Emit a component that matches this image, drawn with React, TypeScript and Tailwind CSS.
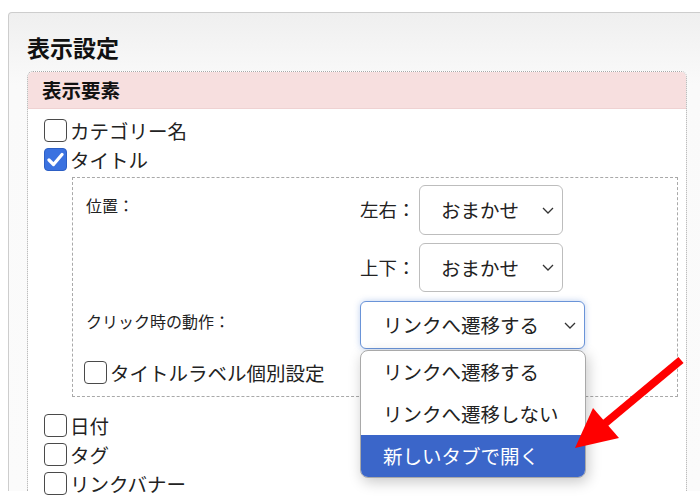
import type { ReactNode } from 'react'

const font = { fontFamily: '"Noto Sans CJK JP", "Noto Sans", sans-serif' }

function Chevron() {
  return (
    <svg width="12" height="7" viewBox="0 0 12 7" className="shrink-0">
      <path d="M1 1l5 5 5-5" fill="none" stroke="#333" strokeWidth="1.3" />
    </svg>
  )
}

function Checkbox({ checked = false }: { checked?: boolean }) {
  if (checked) {
    return (
      <span className="flex h-[23px] w-[23px] shrink-0 items-center justify-center rounded-[4px] border border-[#2d5fc4] bg-[#3b72e0]">
        <svg width="17" height="15" viewBox="0 0 17 15">
          <path d="M2 8l4.5 4.5L15 2.5" fill="none" stroke="#fff" strokeWidth="3.2" strokeLinecap="round" strokeLinejoin="round" />
        </svg>
      </span>
    )
  }
  return <span className="h-[23px] w-[23px] shrink-0 rounded-[4px] border-[1.5px] border-[#4a4a4a] bg-white" />
}

function CheckRow({ label, checked }: { label: string; checked?: boolean }) {
  return (
    <div className="flex h-[29px] items-center gap-[3px] text-[19.5px] leading-[29px] text-[#222]">
      <Checkbox checked={checked} />
      <span>{label}</span>
    </div>
  )
}

function FakeSelect({ value, className, children }: { value: string; className: string; children?: ReactNode }) {
  return (
    <div className={`relative flex items-center justify-between rounded-[6px] bg-white pr-[8px] text-[19.5px] text-[#222] ${className}`}>
      <span>{value}</span>
      <Chevron />
      {children}
    </div>
  )
}

export default function App() {
  const options = ['リンクへ遷移する', 'リンクへ遷移しない', '新しいタブで開く']

  return (
    <div className="relative h-[496px] w-[700px] overflow-hidden bg-white pl-2 pt-3" style={font}>
      <div className="w-[712px] rounded-tl-[4px] rounded-tr-[4px] border border-b-0 border-[#cdcdcd] bg-gradient-to-b from-[#efefef] via-[#fafafa] via-[15%] to-[#fbfbfb] pl-[18px] pr-[32px] pt-[19px]">
        <h1 className="mb-[9px] text-[23px] font-bold leading-[30px] text-[#111]">表示設定</h1>

        {/* 表示要素 */}
        <div className="h-[420px] rounded-t-[6px] border border-b-0 border-dotted border-[#a8a8a8] bg-white">
          <div className="flex h-[37px] items-center rounded-t-[5px] border-b border-[#efd2d2] bg-[#f7dfdf] pl-[14px] text-[19.5px] font-bold text-[#111]">
            表示要素
          </div>

          <div className="pl-[16px] pr-[8px] pt-[7px]">
            <CheckRow label="カテゴリー名" />
            <CheckRow label="タイトル" checked />

            <div className="ml-[28px] mt-[3px] border border-dashed border-[#a9a9a9] pb-[9px] pl-[13px] pt-[7px]">
              {/* 位置 */}
              <div className="flex">
                <div className="w-[274px] pt-[12px] text-[16px] leading-[16px] text-[#222]">位置：</div>
                <div className="flex flex-col gap-[8px]">
                  <div className="flex items-center">
                    <span className="w-[59px] text-[18.5px] text-[#222]">左右：</span>
                    <FakeSelect value="おまかせ" className="h-[50px] w-[144px] border border-[#bdbdbd] pl-[21px]" />
                  </div>
                  <div className="flex items-center">
                    <span className="w-[59px] text-[18.5px] text-[#222]">上下：</span>
                    <FakeSelect value="おまかせ" className="h-[49px] w-[144px] border border-[#bdbdbd] pl-[21px]" />
                  </div>
                </div>
              </div>

              {/* クリック時の動作 */}
              <div className="mt-[9px] flex">
                <div className="w-[274px] pt-[12px] text-[16px] leading-[16px] text-[#222]">クリック時の動作：</div>
                <FakeSelect
                  value="リンクへ遷移する"
                  className="h-[48px] w-[225px] border border-[#6a94d8] pl-[22px] shadow-[0_0_6px_rgba(70,120,210,0.35)]"
                >
                  <div className="absolute left-[-1px] top-[48px] z-10 w-[226px] overflow-hidden rounded-[8px] border border-[#a9a9a9] bg-white shadow-[2px_4px_14px_rgba(0,0,0,0.22)]">
                    {options.map((o, i) => (
                      <div
                        key={o}
                        className={`flex h-[42px] items-center pl-[22px] text-[19.5px] ${
                          i === 2 ? 'bg-[#3b66c9] text-white' : 'text-[#222]'
                        }`}
                      >
                        {o}
                      </div>
                    ))}
                  </div>
                </FakeSelect>
              </div>

              <div className="-ml-[2px] mt-[9px]">
                <CheckRow label="タイトルラベル個別設定" />
              </div>
            </div>

            <div className="mt-[14px]">
              <CheckRow label="日付" />
              <CheckRow label="タグ" />
              <CheckRow label="リンクバナー" />
            </div>
          </div>
        </div>
      </div>

      {/* red arrow */}
      <svg className="pointer-events-none absolute left-0 top-0 z-20" width="700" height="496" viewBox="0 0 700 496">
        <line x1="681" y1="360" x2="603" y2="425" stroke="#ff0000" strokeWidth="8" />
        <polygon points="575,448 593,408 619,438" fill="#ff0000" />
      </svg>
    </div>
  )
}
